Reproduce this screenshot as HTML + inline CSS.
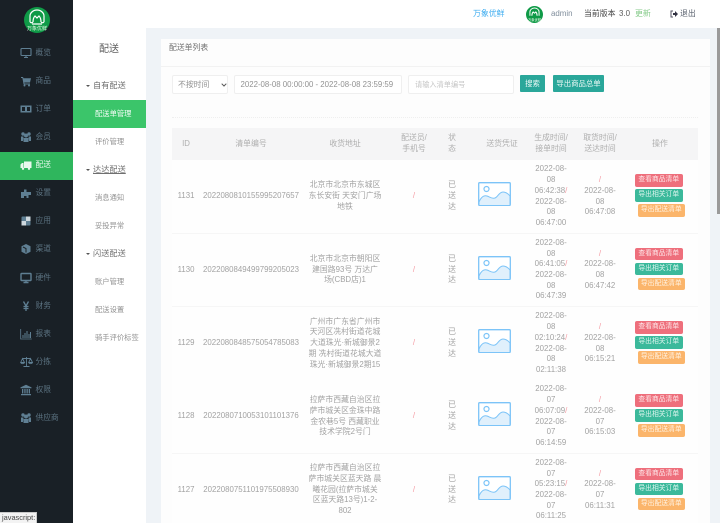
<!DOCTYPE html>
<html lang="zh"><head><meta charset="utf-8"><title>配送单列表</title>
<style>
*{margin:0;padding:0;box-sizing:border-box}
html,body{width:720px;height:523px;overflow:hidden;background:#eff3f7}
body{position:relative;font-family:"Liberation Sans","Noto Sans CJK SC",sans-serif;font-size:7.85px;line-height:10.7px;color:#a2a2a2}
div,span.a,svg.a{position:absolute}
#wrap{position:absolute;left:0;top:0;width:720px;height:523px;overflow:hidden;filter:blur(.35px)}
.top{left:146px;top:0;width:574px;height:28px;background:#fff}
.side{left:0;top:0;width:73px;height:523px;background:#192026}
.sub{left:73px;top:0;width:73px;height:523px;background:#fff}
.on{left:0;top:152px;width:73px;height:28px;background:#2fb65d}
.it{left:35.5px;font-size:7.7px;height:12px;line-height:12px;color:#5c7382;white-space:nowrap}
.ic{left:20px;width:12px;height:12px}
.subon{left:73px;top:100px;width:73px;height:28px;background:#3bc56a}
.s1{left:93px;font-size:8.2px;height:12px;line-height:12px;color:#6f6f6f;white-space:nowrap}
.s2{left:95px;font-size:7.3px;height:12px;line-height:12px;color:#929292;white-space:nowrap}
.car{left:86px;width:0;height:0;border-left:2.3px solid transparent;border-right:2.3px solid transparent;border-top:2.6px solid #555}
.card{left:161px;top:39px;width:549px;height:484px;background:#fdfdfd}
.hline{left:161px;top:66px;width:549px;height:1px;background:#f2f2f2}
.box{top:75px;height:19px;background:#fff;border:1px solid #efefef;border-radius:2px;line-height:17px;color:#929292;white-space:nowrap}
.btn{top:75px;height:17px;background:#2aa79a;color:#eefaf7;line-height:17px;text-align:center;font-size:7.4px;border-radius:1px}
.dot{left:172px;top:117px;width:526px;height:0;border-top:1px dotted #efefef}
.th{left:172px;top:128px;width:526px;height:32px;background:#f5f5f6}
.h{top:128px;height:32px;display:flex;align-items:center;justify-content:center;text-align:center;color:#aeaeae;white-space:nowrap}
.row{left:172px;width:526px;height:73.5px;background:#fefefe;border-bottom:1px solid #f6f6f6}
.c{top:0;height:73px;display:flex;align-items:center;justify-content:center;text-align:center;white-space:nowrap}
.id{left:0;width:28px}
.no{left:28px;width:102px}
.ad{left:130px;width:86px}
.dv{left:216px;width:52px;color:#f59aa2}
.st{left:268px;width:24px}
.tm{left:352px;width:54px}
.pk{left:401px;width:54px}
i{font-style:normal;color:#f59aa2}
.pic{left:306px;top:22px;width:33px;height:24px}
.b{height:12.5px;width:47.5px;border-radius:2px;text-align:center;line-height:12.5px;font-size:6.8px;white-space:nowrap}
.b1{left:463px;top:14px;background:#ee6f7c;color:#fde6e8}
.b2{left:463px;top:29px;background:#3bb99b;color:#dff5ef}
.b3{left:465.5px;top:44px;background:#fbb56b;color:#fff2e2}
.thumb{left:717px;top:28px;width:3px;height:186px;background:#9a9a9a}
.tip{left:0;top:512px;width:37px;height:11px;background:#f3f3f3;border:1px solid #c9c9c9;border-left:0;border-bottom:0;color:#444;font-size:7.4px;line-height:10px;padding-left:2px;white-space:nowrap}
</style></head><body>
<div id="wrap">
<div class="top"></div>
<div class="side"></div>
<div class="sub"></div>
<div class="on"></div>
<div class="subon"></div>

<svg class="a" style="left:24px;top:7px" width="26" height="26" viewBox="0 0 26 26"><circle cx="13" cy="13" r="13" fill="#0f9a47"/><path d="M6 15V9c0-3 3-6 7-6s7 3 7 6v6M6 15c1 1 2 1 3 0M17 15c1 1 2 1 3 0M9 15c0-3 1-5 2-6l2 2 2-2c1 1 2 3 2 6M8 17h10" fill="none" stroke="#fff" stroke-width="1.200"/><text x="13" y="23" text-anchor="middle" font-size="5" fill="#eafbe9" font-family="'Noto Sans CJK SC',sans-serif">万象优鲜</text></svg>

<svg class="a ic" style="top:47px" viewBox="0 0 12 12" fill="none" stroke="#5f7f93" stroke-width="1.1"><rect x="1" y="1.5" width="10" height="7" rx=".8"/><path d="M4 10.5h4M6 8.5v2"/></svg><div class="it" style="top:47px">概览</div>
<svg class="a ic" style="top:75px" viewBox="0 0 12 12" fill="#5f7f93"><path d="M1 2h2l.5 1.2H11L10 7.5H4.3L4.5 8.5H10v1H3.6L2.4 3H1z"/><circle cx="4.5" cy="10.5" r="1"/><circle cx="9" cy="10.5" r="1"/></svg><div class="it" style="top:75px">商品</div>
<svg class="a ic" style="top:103px" viewBox="0 0 12 12"><rect x=".5" y="2.5" width="11" height="7" fill="#5f7f93"/><rect x="2" y="4" width="8" height="4" fill="#192026"/><rect x="5" y="4" width="2" height="4" fill="#5f7f93"/></svg><div class="it" style="top:103px">订单</div>
<svg class="a ic" style="top:131px" viewBox="0 0 12 12" fill="#5f7f93"><circle cx="3" cy="3" r="1.7"/><circle cx="9" cy="3" r="1.7"/><circle cx="6" cy="4.5" r="2"/><path d="M1 5.500h2.500L3 10H1zM8.500 5.500H11V10H9zM3.500 7h5v4h-5z"/></svg><div class="it" style="top:131px">会员</div>
<svg class="a ic" style="top:159px" viewBox="0 0 12 12" fill="#e9f8ee"><path d="M4 2.500h7.500v6.500H4zM.5 5.500 2 4h1.500v5H.5z"/><circle cx="3" cy="9.700" r="1.200"/><circle cx="9" cy="9.700" r="1.200"/></svg><div class="it" style="top:159px;color:#f0fbf4">配送</div>
<svg class="a ic" style="top:187px" viewBox="0 0 12 12" fill="#5f7f93"><path d="M1 5h3V2.500h2.500V5H11v3H8.500v3H6.500V9H4v2H1z"/></svg><div class="it" style="top:187px">设置</div>
<svg class="a ic" style="top:215px" viewBox="0 0 12 12"><rect x="1.500" y="1.500" width="9" height="9" rx="1" fill="#5f7f93"/><rect x="6" y="1.500" width="4.500" height="4.500" fill="#cfd9df"/><rect x="1.500" y="6" width="4.500" height="4.500" fill="#cfd9df"/></svg><div class="it" style="top:215px">应用</div>
<svg class="a ic" style="top:243px" viewBox="0 0 12 12"><path d="M6 1l4.500 2.200v5.600L6 11 1.500 8.800V3.200z" fill="#5f7f93"/><path d="M3 4l3 1.500V9.500" fill="none" stroke="#192026"/></svg><div class="it" style="top:243px">渠道</div>
<svg class="a ic" style="top:271.500px" viewBox="0 0 12 12" fill="none" stroke="#5f7f93" stroke-width="1.400"><rect x="1" y="1.500" width="10" height="7" rx=".6"/><path d="M3.500 10.500h5M6 8.500v2"/></svg><div class="it" style="top:271.500px">硬件</div>
<svg class="a ic" style="top:300px" viewBox="0 0 12 12" fill="none" stroke="#5f7f93" stroke-width="1.300"><path d="M3.500 1.500 6 6l2.500-4.500M3.500 6.500h5M3.500 8.500h5M6 6v5"/></svg><div class="it" style="top:300px">财务</div>
<svg class="a ic" style="top:328px" viewBox="0 0 12 12" fill="none" stroke="#5f7f93"><path d="M.7 1v10h11" stroke-width=".8"/><path d="M3 10V7M5 10V5M7 10V3M9 10V6M10.500 10V4" stroke-width="1"/></svg><div class="it" style="top:328px">报表</div>
<svg class="a ic" style="top:356px;left:19.500px;width:13px" viewBox="0 0 13 12" fill="none" stroke="#5f7f93" stroke-width=".9"><path d="M6.500 1v9M3.500 10.500h6M2.500 2.500h8M2.500 2.500.7 6.500h3.800zM10.500 2.500l-1.800 4h3.800zM.7 6.700c.6 1.300 3.200 1.300 3.800 0M8.700 6.700c.6 1.300 3.200 1.300 3.800 0"/></svg><div class="it" style="top:356px">分拣</div>
<svg class="a ic" style="top:384px" viewBox="0 0 12 12" fill="#5f7f93"><path d="M6 .8 11.500 3.400v.8H.5v-.8z"/><path d="M2 5h1.300v4.500H2zM4.300 5h1.300v4.500H4.300zM6.500 5h1.300v4.500H6.500zM8.700 5H10v4.500H8.700zM1 10h10v1.200H1z"/></svg><div class="it" style="top:384px">权限</div>
<svg class="a ic" style="top:412px" viewBox="0 0 12 12" fill="#5f7f93"><circle cx="3" cy="3" r="1.700"/><circle cx="9" cy="3" r="1.700"/><circle cx="6" cy="4.500" r="2"/><path d="M1 5.500h2.500L3 10H1zM8.500 5.500H11V10H9zM3.500 7h5v4h-5z"/></svg><div class="it" style="top:412px">供应商</div>

<div style="left:99px;top:44px;font-size:10px;line-height:12px;color:#5f5f5f">配送</div>
<div class="car" style="top:85px"></div><div class="s1" style="top:80px">自有配送</div>
<div class="s2" style="top:108px;color:#f7fdf9">配送单管理</div>
<div class="s2" style="top:136px">评价管理</div>
<div class="car" style="top:169px"></div><div class="s1" style="top:164px;text-decoration:underline">达达配送</div>
<div class="s2" style="top:192px">消息通知</div>
<div class="s2" style="top:220px">妥投异常</div>
<div class="car" style="top:253px"></div><div class="s1" style="top:248px">闪送配送</div>
<div class="s2" style="top:276px">账户管理</div>
<div class="s2" style="top:304px">配送设置</div>
<div class="s2" style="top:332px">骑手评价标签</div>

<div style="left:473px;top:8px;font-size:7.900px;line-height:12px;color:#3fadf0">万象优鲜</div>
<svg class="a" style="left:526px;top:6px" width="17" height="17" viewBox="0 0 26 26"><circle cx="13" cy="13" r="13" fill="#0f9a47"/><path d="M6 15V9c0-3 3-6 7-6s7 3 7 6v6M9 15c0-3 1-5 2-6l2 2 2-2c1 1 2 3 2 6" fill="none" stroke="#fff" stroke-width="1.500"/><text x="13" y="23" text-anchor="middle" font-size="5" fill="#eafbe9" font-family="'Noto Sans CJK SC',sans-serif">万象优鲜</text></svg>
<div style="left:551px;top:8px;font-size:7.900px;line-height:12px;color:#808e9c">admin</div>
<div style="left:584px;top:8px;font-size:7.900px;line-height:12px;color:#444">当前版本</div>
<div style="left:619px;top:8px;font-size:7.900px;line-height:12px;color:#5c5c5c">3.0</div>
<div style="left:635px;top:8px;font-size:7.900px;line-height:12px;color:#84ca88">更新</div>
<svg class="a" style="left:670px;top:10px" width="8" height="8" viewBox="0 0 8 8"><path d="M3 1H1v6h2" fill="none" stroke="#556" stroke-width="1"/><path d="M3 3h2V1l3 3-3 3V5H3z" fill="#334"/></svg>
<div style="left:680px;top:8px;font-size:7.900px;line-height:12px;color:#5c6470">退出</div>

<div class="card"></div>
<div class="hline"></div>
<div style="left:169px;top:42px;line-height:12px;color:#6f6f6f">配送单列表</div>

<div class="box" style="left:172px;width:56px;padding-left:5px">不按时间<svg class="a" style="left:48px;top:7px" width="6" height="4" viewBox="0 0 6 4"><path d="M.7.7 3 3 5.300.7" fill="none" stroke="#555" stroke-width="1"/></svg></div>
<div class="box" style="left:234px;width:168px;padding-left:5.500px">2022-08-08 00:00:00 - 2022-08-08 23:59:59</div>
<div class="box" style="left:408px;width:106px;padding-left:6px;color:#c6c6c6;font-size:7.200px">请输入清单编号</div>
<div class="btn" style="left:520px;width:25px">搜索</div>
<div class="btn" style="left:553px;width:51px">导出商品总单</div>
<div class="dot"></div>

<div class="th"></div>
<div class="h" style="left:172px;width:28px">ID</div>
<div class="h" style="left:200px;width:102px">清单编号</div>
<div class="h" style="left:302px;width:86px">收货地址</div>
<div class="h" style="left:388px;width:52px">配送员/<br>手机号</div>
<div class="h" style="left:440px;width:24px">状<br>态</div>
<div class="h" style="left:470px;width:64px">送货凭证</div>
<div class="h" style="left:524px;width:54px">生成时间/<br>接单时间</div>
<div class="h" style="left:573px;width:54px">取货时间/<br>送达时间</div>
<div class="h" style="left:631px;width:58px">操作</div>

<div class="row" style="top:160px">
<div class="c id">1131</div><div class="c no">2022080810155995207657</div>
<div class="c ad"><span>北京市北京市东城区<br>东长安街 天安门广场<br>地铁</span></div>
<div class="c dv">/</div><div class="c st"><span>已<br>送<br>达</span></div>
<svg class="a pic" viewBox="0 0 33 24"><rect x=".7" y=".7" width="31.600" height="22.600" rx="1" fill="#fff" stroke="#7cc4f8" stroke-width="1.300"/><path d="M1 20c2-5 5-7 8-6s5 3 8 2 4-6 8-6 6 3 7 4v9.500H1z" fill="#e0f0fc" stroke="#7cc4f8"/><circle cx="8.500" cy="7" r="2.500" fill="#fff" stroke="#7cc4f8" stroke-width="1.200"/></svg>
<div class="c tm"><span>2022-08-<br>08<br>06:42:38<i>/</i><br>2022-08-<br>08<br>06:47:00</span></div>
<div class="c pk"><span><i>/</i><br>2022-08-<br>08<br>06:47:08</span></div>
<div class="b b1">查看商品清单</div><div class="b b2">导出相关订单</div><div class="b b3">导出配送清单</div>
</div>

<div class="row" style="top:233.500px">
<div class="c id">1130</div><div class="c no">2022080849499799205023</div>
<div class="c ad"><span>北京市北京市朝阳区<br>建国路93号 万达广<br>场(CBD店)1</span></div>
<div class="c dv">/</div><div class="c st"><span>已<br>送<br>达</span></div>
<svg class="a pic" viewBox="0 0 33 24"><rect x=".7" y=".7" width="31.600" height="22.600" rx="1" fill="#fff" stroke="#7cc4f8" stroke-width="1.300"/><path d="M1 20c2-5 5-7 8-6s5 3 8 2 4-6 8-6 6 3 7 4v9.500H1z" fill="#e0f0fc" stroke="#7cc4f8"/><circle cx="8.500" cy="7" r="2.500" fill="#fff" stroke="#7cc4f8" stroke-width="1.200"/></svg>
<div class="c tm"><span>2022-08-<br>08<br>06:41:05<i>/</i><br>2022-08-<br>08<br>06:47:39</span></div>
<div class="c pk"><span><i>/</i><br>2022-08-<br>08<br>06:47:42</span></div>
<div class="b b1">查看商品清单</div><div class="b b2">导出相关订单</div><div class="b b3">导出配送清单</div>
</div>

<div class="row" style="top:307px">
<div class="c id">1129</div><div class="c no">2022080848575054785083</div>
<div class="c ad"><span>广州市广东省广州市<br>天河区冼村街道花城<br>大道珠光·新城御景2<br>期 冼村街道花城大道<br>珠光·新城御景2期15</span></div>
<div class="c dv">/</div><div class="c st"><span>已<br>送<br>达</span></div>
<svg class="a pic" viewBox="0 0 33 24"><rect x=".7" y=".7" width="31.600" height="22.600" rx="1" fill="#fff" stroke="#7cc4f8" stroke-width="1.300"/><path d="M1 20c2-5 5-7 8-6s5 3 8 2 4-6 8-6 6 3 7 4v9.500H1z" fill="#e0f0fc" stroke="#7cc4f8"/><circle cx="8.500" cy="7" r="2.500" fill="#fff" stroke="#7cc4f8" stroke-width="1.200"/></svg>
<div class="c tm"><span>2022-08-<br>08<br>02:10:24<i>/</i><br>2022-08-<br>08<br>02:11:38</span></div>
<div class="c pk"><span><i>/</i><br>2022-08-<br>08<br>06:15:21</span></div>
<div class="b b1">查看商品清单</div><div class="b b2">导出相关订单</div><div class="b b3">导出配送清单</div>
</div>

<div class="row" style="top:380px">
<div class="c id">1128</div><div class="c no">2022080710053101101376</div>
<div class="c ad"><span>拉萨市西藏自治区拉<br>萨市城关区金珠中路<br>金农巷5号 西藏职业<br>技术学院2号门</span></div>
<div class="c dv">/</div><div class="c st"><span>已<br>送<br>达</span></div>
<svg class="a pic" viewBox="0 0 33 24"><rect x=".7" y=".7" width="31.600" height="22.600" rx="1" fill="#fff" stroke="#7cc4f8" stroke-width="1.300"/><path d="M1 20c2-5 5-7 8-6s5 3 8 2 4-6 8-6 6 3 7 4v9.500H1z" fill="#e0f0fc" stroke="#7cc4f8"/><circle cx="8.500" cy="7" r="2.500" fill="#fff" stroke="#7cc4f8" stroke-width="1.200"/></svg>
<div class="c tm"><span>2022-08-<br>07<br>06:07:09<i>/</i><br>2022-08-<br>07<br>06:14:59</span></div>
<div class="c pk"><span><i>/</i><br>2022-08-<br>07<br>06:15:03</span></div>
<div class="b b1">查看商品清单</div><div class="b b2">导出相关订单</div><div class="b b3">导出配送清单</div>
</div>

<div class="row" style="top:453.500px">
<div class="c id">1127</div><div class="c no">2022080751101975508930</div>
<div class="c ad"><span>拉萨市西藏自治区拉<br>萨市城关区蓝天路 晨<br>曦花园(拉萨市城关<br>区蓝天路13号)1-2-<br>802</span></div>
<div class="c dv">/</div><div class="c st"><span>已<br>送<br>达</span></div>
<svg class="a pic" viewBox="0 0 33 24"><rect x=".7" y=".7" width="31.600" height="22.600" rx="1" fill="#fff" stroke="#7cc4f8" stroke-width="1.300"/><path d="M1 20c2-5 5-7 8-6s5 3 8 2 4-6 8-6 6 3 7 4v9.500H1z" fill="#e0f0fc" stroke="#7cc4f8"/><circle cx="8.500" cy="7" r="2.500" fill="#fff" stroke="#7cc4f8" stroke-width="1.200"/></svg>
<div class="c tm"><span>2022-08-<br>07<br>05:23:15<i>/</i><br>2022-08-<br>07<br>06:11:25</span></div>
<div class="c pk"><span><i>/</i><br>2022-08-<br>07<br>06:11:31</span></div>
<div class="b b1">查看商品清单</div><div class="b b2">导出相关订单</div><div class="b b3">导出配送清单</div>
</div>

<div class="thumb"></div>
<div class="tip">javascript:</div>
</div>
</body></html>
